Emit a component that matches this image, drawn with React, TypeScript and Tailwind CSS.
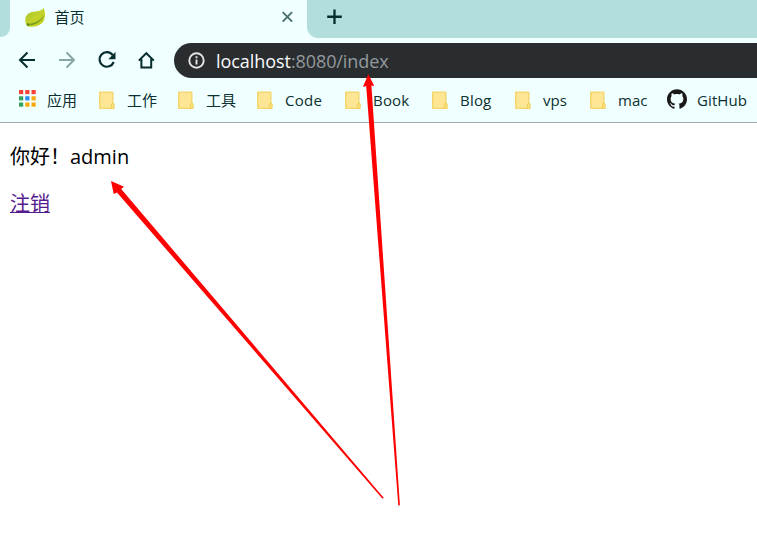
import React from 'react';

const uiFont = "font-['Open_Sans','Noto_Sans_CJK_SC',sans-serif]";

function Leaf() {
  return (
    <svg width="22" height="21" viewBox="0 0 22 21" className="block">
      <defs>
        <linearGradient id="leaf" x1="0" y1="0" x2="1" y2="1">
          <stop offset="0" stopColor="#a4c42c" />
          <stop offset="0.5" stopColor="#c3d22c" />
          <stop offset="1" stopColor="#c3cc18" />
        </linearGradient>
      </defs>
      <path d="M18.500 1C20.600 5 20.600 11 18 15C15 19 9 20.600 3 19.500C.3 18 0 13.500 .5 11C1.500 6.500 5.500 5 10.500 4.500C14.500 4.100 17 3.200 18.500 1Z" fill="url(#leaf)" />
      <path d="M2 16.800C9 16.800 15 14 19 8C17 14 11 18.300 3 18.600Z" fill="#759f22" />
      <circle cx="3" cy="17.600" r="1.300" fill="#5d8f20" />
    </svg>
  );
}

function AppsGrid() {
  const colors = ['#f44336', '#f44336', '#f44336', '#35a35d', '#2c8df5', '#fba90a', '#35a35d', '#fba90a', '#fba90a'];
  return (
    <svg width="17" height="17" viewBox="0 0 17 17" className="-mt-[5px] block">
      {colors.map((c, i) => (
        <rect key={i} x={(i % 3) * 6.25} y={Math.floor(i / 3) * 6.25} width="4.200" height="4.200" fill={c} />
      ))}
    </svg>
  );
}

function Folder() {
  return (
    <svg width="17" height="19" viewBox="0 0 17 19" className="-mt-px block">
      <path d="M1 .5H13.500Q14.500.5 14.500 1.500V11.500L15.500 13V17Q15.500 18 14.500 18H1Q0 18 0 17V1.500Q0 .5 1 .5Z" fill="#f4d56b" />
      <path d="M1.500 1.800H13.200V12L12 13.500V16.800H1.500Z" fill="#ffe694" />
      <path d="M14 12.300Q12.200 12.300 12.400 15V17.500H15V13.300Z" fill="#ffe27c" stroke="#f0cb52" strokeWidth=".8" />
    </svg>
  );
}

function GitHub() {
  return (
    <svg width="20" height="20" viewBox="0 0 24 24" className="-mt-[3px] block" fill="#191717">
      <path d="M12 .297c-6.630 0-12 5.373-12 12 0 5.303 3.438 9.800 8.205 11.385.6.113.82-.258.82-.577 0-.285-.01-1.040-.015-2.040-3.338.724-4.042-1.610-4.042-1.610C4.422 18.070 3.633 17.700 3.633 17.700c-1.087-.744.084-.729.084-.729 1.205.084 1.838 1.236 1.838 1.236 1.070 1.835 2.809 1.305 3.495.998.108-.776.417-1.305.76-1.605-2.665-.3-5.466-1.332-5.466-5.930 0-1.310.465-2.380 1.235-3.220-.135-.303-.54-1.523.105-3.176 0 0 1.005-.322 3.300 1.230.96-.267 1.980-.399 3-.405 1.020.006 2.040.138 3 .405 2.280-1.552 3.285-1.230 3.285-1.230.645 1.653.24 2.873.12 3.176.765.840 1.230 1.910 1.230 3.220 0 4.610-2.805 5.625-5.475 5.920.42.360.81 1.096.81 2.220 0 1.606-.015 2.896-.015 3.286 0 .315.21.690.825.570C20.565 22.092 24 17.592 24 12.297c0-6.627-5.373-12-12-12" />
    </svg>
  );
}

const bookmarks = [
  { label: '应用', cell: 'w-[80px]', text: '' },
  { label: '工作', cell: 'w-[79px]', text: '' },
  { label: '工具', cell: 'w-[79px]', text: '' },
  { label: 'Code', cell: 'w-[88px]', text: 'tracking-[0.3px]' },
  { label: 'Book', cell: 'w-[87px]', text: 'tracking-[0.2px]' },
  { label: 'Blog', cell: 'w-[83px]', text: 'tracking-[0.2px]' },
  { label: 'vps', cell: 'w-[75px]', text: 'tracking-[0.1px]' },
  { label: 'mac', cell: 'w-[77px]', text: '' },
];

export default function App() {
  return (
    <div className={`relative h-[550px] w-[757px] overflow-hidden bg-white ${uiFont}`}>
      <header className="h-[123px] border-b border-[#a0adad] bg-[#f0ffff] text-[#0b3030]">
        <div className="flex h-[38px]">
          <div className="h-[37px] w-[10px] rounded-br-[9px] bg-[#b2dfdd]" />
          <div className="flex w-[297px] items-start pl-[15px]">
            <div className="w-[29.500px] pt-[7px]"><Leaf /></div>
            <span className="w-[225.500px] pt-[7px] text-[15px] leading-5">首页</span>
            <svg width="14" height="14" viewBox="0 0 14 14" className="mt-[10px] block" stroke="#476c6c" strokeWidth="1.800">
              <path d="M2.700 2.200l9.400 9.400M12.100 2.200L2.700 11.600" />
            </svg>
          </div>
          <div className="h-[38px] flex-1 rounded-bl-[11px] bg-[#b2dfdd] pt-[9px] pl-[20px]">
            <svg width="15" height="16" viewBox="0 0 15 16" stroke="#062d2d" strokeWidth="2.300">
              <path d="M7.500.5v14.500M.200 7.750h14.600" />
            </svg>
          </div>
        </div>
        <nav className="flex h-[45px] items-center">
          <div className="flex w-[174px] items-center pl-[15px]">
            <svg width="144" height="24" viewBox="0 0 144 24" className="-mt-px block" fill="none" stroke="#062d2d" strokeWidth="2">
              <path d="M20 12H5M12.500 4.500L5 12L12.500 19.500" />
              <path d="M44 12h15M51.500 4.500L59 12L51.500 19.500" stroke="#8aa5a5" />
              <path d="M97.700 7A7.300 7.300 0 1 0 98.700 14" strokeWidth="2.200" />
              <path d="M100.500 4v7.200h-7.200Z" fill="#062d2d" stroke="none" />
              <path d="M123.800 12.600L131.300 5.200L138.800 12.600M126.400 11v8.500h9.800V11" />
            </svg>
          </div>
          <div className="flex h-[35px] flex-1 items-center rounded-l-full bg-[#292d30] pl-[14px] text-[18px] text-[#94999d]">
            <svg width="17" height="17" viewBox="0 0 17 17" className="mr-[11px] block" fill="none" stroke="#e2e5e7" strokeWidth="1.900">
              <circle cx="8.500" cy="8.500" r="7.200" />
              <path d="M8.500 7.600v4.900M8.500 4.300v1.900" />
            </svg>
            <span className="pt-px tracking-[-0.05px] text-[#f8fafb]">localhost</span>
            <span className="pt-px tracking-[-0.1px]">:8080/index</span>
          </div>
        </nav>
        <div className="flex h-[35px] items-center pl-[19px] text-[15px]">
          {bookmarks.map((b, i) => (
            <div key={b.label} className={`flex shrink-0 items-center ${b.cell}`}>
              <span className="w-[28px] shrink-0">{i === 0 ? <AppsGrid /> : <Folder />}</span>
              <span className={b.text}>{b.label}</span>
            </div>
          ))}
          <div className="flex shrink-0 items-center">
            <span className="w-[30px]"><GitHub /></span>
            <span className="tracking-[0.1px]">GitHub</span>
          </div>
        </div>
      </header>
      <main className="pt-[19px] pl-[10px] text-[20px] leading-[30px] text-black">
        <p className="flex">
          <span className="w-[60px]">你好！</span>
          <span>admin</span>
        </p>
        <p className="mt-[17px]">
          <a className="text-[#551a8b] underline decoration-1 underline-offset-1">注销</a>
        </p>
      </main>
      <svg className="pointer-events-none absolute inset-0" width="757" height="550" viewBox="0 0 757 550" fill="#ff0000">
        <path d="M111 181L124 186.700L121.200 189L383.700 497.700L382.500 498.800L117 192.500L113.700 194Z" />
        <path d="M368.300 74.300L374.300 86L371.400 85.500L399.900 505.300L398.300 505.400L366.200 86L362.900 87Z" />
      </svg>
    </div>
  );
}
